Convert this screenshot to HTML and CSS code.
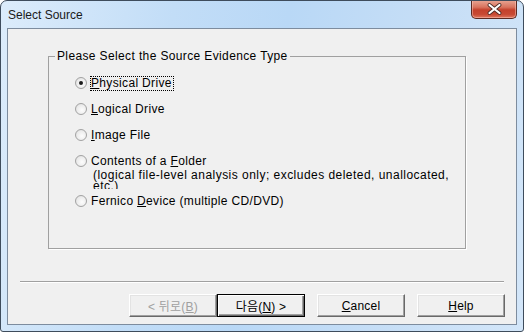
FILE: index.html
```html
<!DOCTYPE html>
<html lang="en">
<head>
  <meta charset="UTF-8">
  <meta name="viewport" content="width=device-width, initial-scale=1.0">
  <title>Select Source</title>
  <link rel="stylesheet" href="styles.css">
</head>
<body>
  <div class="window">
    <div class="titlebar">
      <span class="title">Select Source</span>
      <button class="close" aria-label="Close">
        <svg width="15" height="12" viewBox="0 0 15 12">
          <path d="M2.5 2 L12.5 10 M12.5 2 L2.5 10" stroke="#4a2a24" stroke-width="3.8" stroke-linecap="round"/>
          <path d="M2.5 2 L12.5 10 M12.5 2 L2.5 10" stroke="#fff" stroke-width="2.2" stroke-linecap="round"/>
        </svg>
      </button>
    </div>

    <div class="client">
      <fieldset class="group">
        <legend>Please Select the Source Evidence Type</legend>
        <div class="options">
          <div class="option">
            <span class="radio checked"></span>
            <span class="label focus"><u>P</u>hysical Drive</span>
          </div>
          <div class="option">
            <span class="radio"></span>
            <span class="label"><u>L</u>ogical Drive</span>
          </div>
          <div class="option">
            <span class="radio"></span>
            <span class="label"><u>I</u>mage File</span>
          </div>
          <div class="option tight">
            <span class="radio"></span>
            <span class="label">Contents of a <u>F</u>older</span>
          </div>
          <div class="sublabel">
            <span>(logical file-level analysis only; excludes deleted, unallocated,</span>
            <span>etc.)</span>
          </div>
          <div class="option">
            <span class="radio"></span>
            <span class="label">Fernico <u>D</u>evice (multiple CD/DVD)</span>
          </div>
        </div>
      </fieldset>

      <div class="separator"></div>

      <div class="buttons">
        <button class="btn" disabled>&lt; 뒤로(<u>B</u>)</button>
        <button class="btn default">다음(<u>N</u>) &gt;</button>
        <button class="btn spaced"><u>C</u>ancel</button>
        <button class="btn spaced"><u>H</u>elp</button>
      </div>
    </div>
  </div>
</body>
</html>
```

FILE: styles.css
```css
body {
  margin: 0;
  padding: 0;
  background: #fff;
  font-family: "Liberation Sans", "Noto Sans CJK KR", sans-serif;
  font-size: 12px;
  color: #000;
}

.window {
  width: 524px;
  height: 332px;
  box-sizing: border-box;
  border: 1px solid #3e4c5c;
  border-radius: 7px 7px 3px 3px;
  background: linear-gradient(100deg, #dcecfb 0%, #c2ddf7 30%, #b9d8f6 50%, #c6def6 75%, #d3e6f9 100%);
  display: flex;
  flex-direction: column;
  padding: 0 6px 6px 6px;
  overflow: hidden;
}

.titlebar {
  height: 27px;
  display: flex;
  align-items: flex-start;
  justify-content: space-between;
}

.title {
  margin-top: 7px;
  margin-left: 1px;
  font-size: 12px;
  color: #1a1a1a;
}

.close {
  width: 46px;
  height: 19px;
  margin-top: -1px;
  padding: 0;
  border: 1px solid #5c2a22;
  border-top: none;
  border-radius: 0 0 5px 5px;
  background: linear-gradient(#e9a896 0%, #d8735e 40%, #c4412c 55%, #c84a34 80%, #e0765e 100%);
  box-shadow: inset 0 0 0 1px rgba(255, 210, 200, 0.45);
  display: flex;
  align-items: center;
  justify-content: center;
}

.client {
  flex: 1;
  border: 1px solid #7d8c9e;
  background: #f0f0f0;
  display: flex;
  flex-direction: column;
}

.group {
  box-sizing: border-box;
  width: 418px;
  height: 200px;
  margin: 20px 0 0 40px;
  padding: 0;
  border: 1px solid #a0a0a0;
  box-shadow: 1px 1px 0 #fff;
  min-width: 0;
}

.group legend {
  margin-left: 6px;
  padding: 0 2px;
  line-height: 14px;
  letter-spacing: 0.37px;
}

.options {
  padding: 13px 0 0 26px;
}

.option {
  display: flex;
  align-items: center;
  height: 14px;
  margin-bottom: 12px;
}

.option.tight {
  margin-bottom: 0;
}

.radio {
  box-sizing: border-box;
  width: 12px;
  height: 12px;
  border-radius: 50%;
  border: 1px solid #a2a2a2;
  background: radial-gradient(circle at 60% 60%, #fdfdfd 0%, #ebebeb 60%, #d6d6d6 100%);
  display: flex;
  align-items: center;
  justify-content: center;
  flex-shrink: 0;
}

.radio.checked::after {
  content: "";
  width: 4px;
  height: 4px;
  border-radius: 50%;
  background: #1c1c1c;
}

.label {
  margin-left: 3px;
  padding: 0 1px 0 0;
  border: 1px solid transparent;
  line-height: 13px;
  white-space: nowrap;
  letter-spacing: 0.34px;
}

.label.focus {
  border: 1px dotted #000;
}

.sublabel {
  height: 19px;
  overflow: hidden;
  padding-left: 18px;
  margin: 2px 0 5px 0;
  line-height: 11px;
  letter-spacing: 0.47px;
}

.sublabel span {
  display: block;
  white-space: nowrap;
}

.separator {
  margin: 32px 12px 0 12px;
  border-top: 1px solid #a0a0a0;
  border-bottom: 1px solid #fff;
}

.buttons {
  display: flex;
  justify-content: flex-end;
  margin-top: 11px;
  padding-right: 11px;
}

.btn {
  box-sizing: border-box;
  width: 88px;
  height: 23px;
  padding: 0;
  font-family: "Liberation Sans", "Noto Sans CJK KR", sans-serif;
  font-size: 12px;
  letter-spacing: 0.2px;
  color: #000;
  background: #f0f0f0;
  border: 1px solid;
  border-color: #fff #696969 #696969 #fff;
  box-shadow: inset -1px -1px 0 #a0a0a0, inset 1px 1px 0 #e3e3e3;
}

.btn:disabled {
  color: #a0a0a0;
}

.btn.default {
  border: 1px solid #000;
  box-shadow: inset 1px 1px 0 #fff, inset -1px -1px 0 #696969, inset -2px -2px 0 #a0a0a0;
}

.btn.spaced {
  margin-left: 12px;
}
```
